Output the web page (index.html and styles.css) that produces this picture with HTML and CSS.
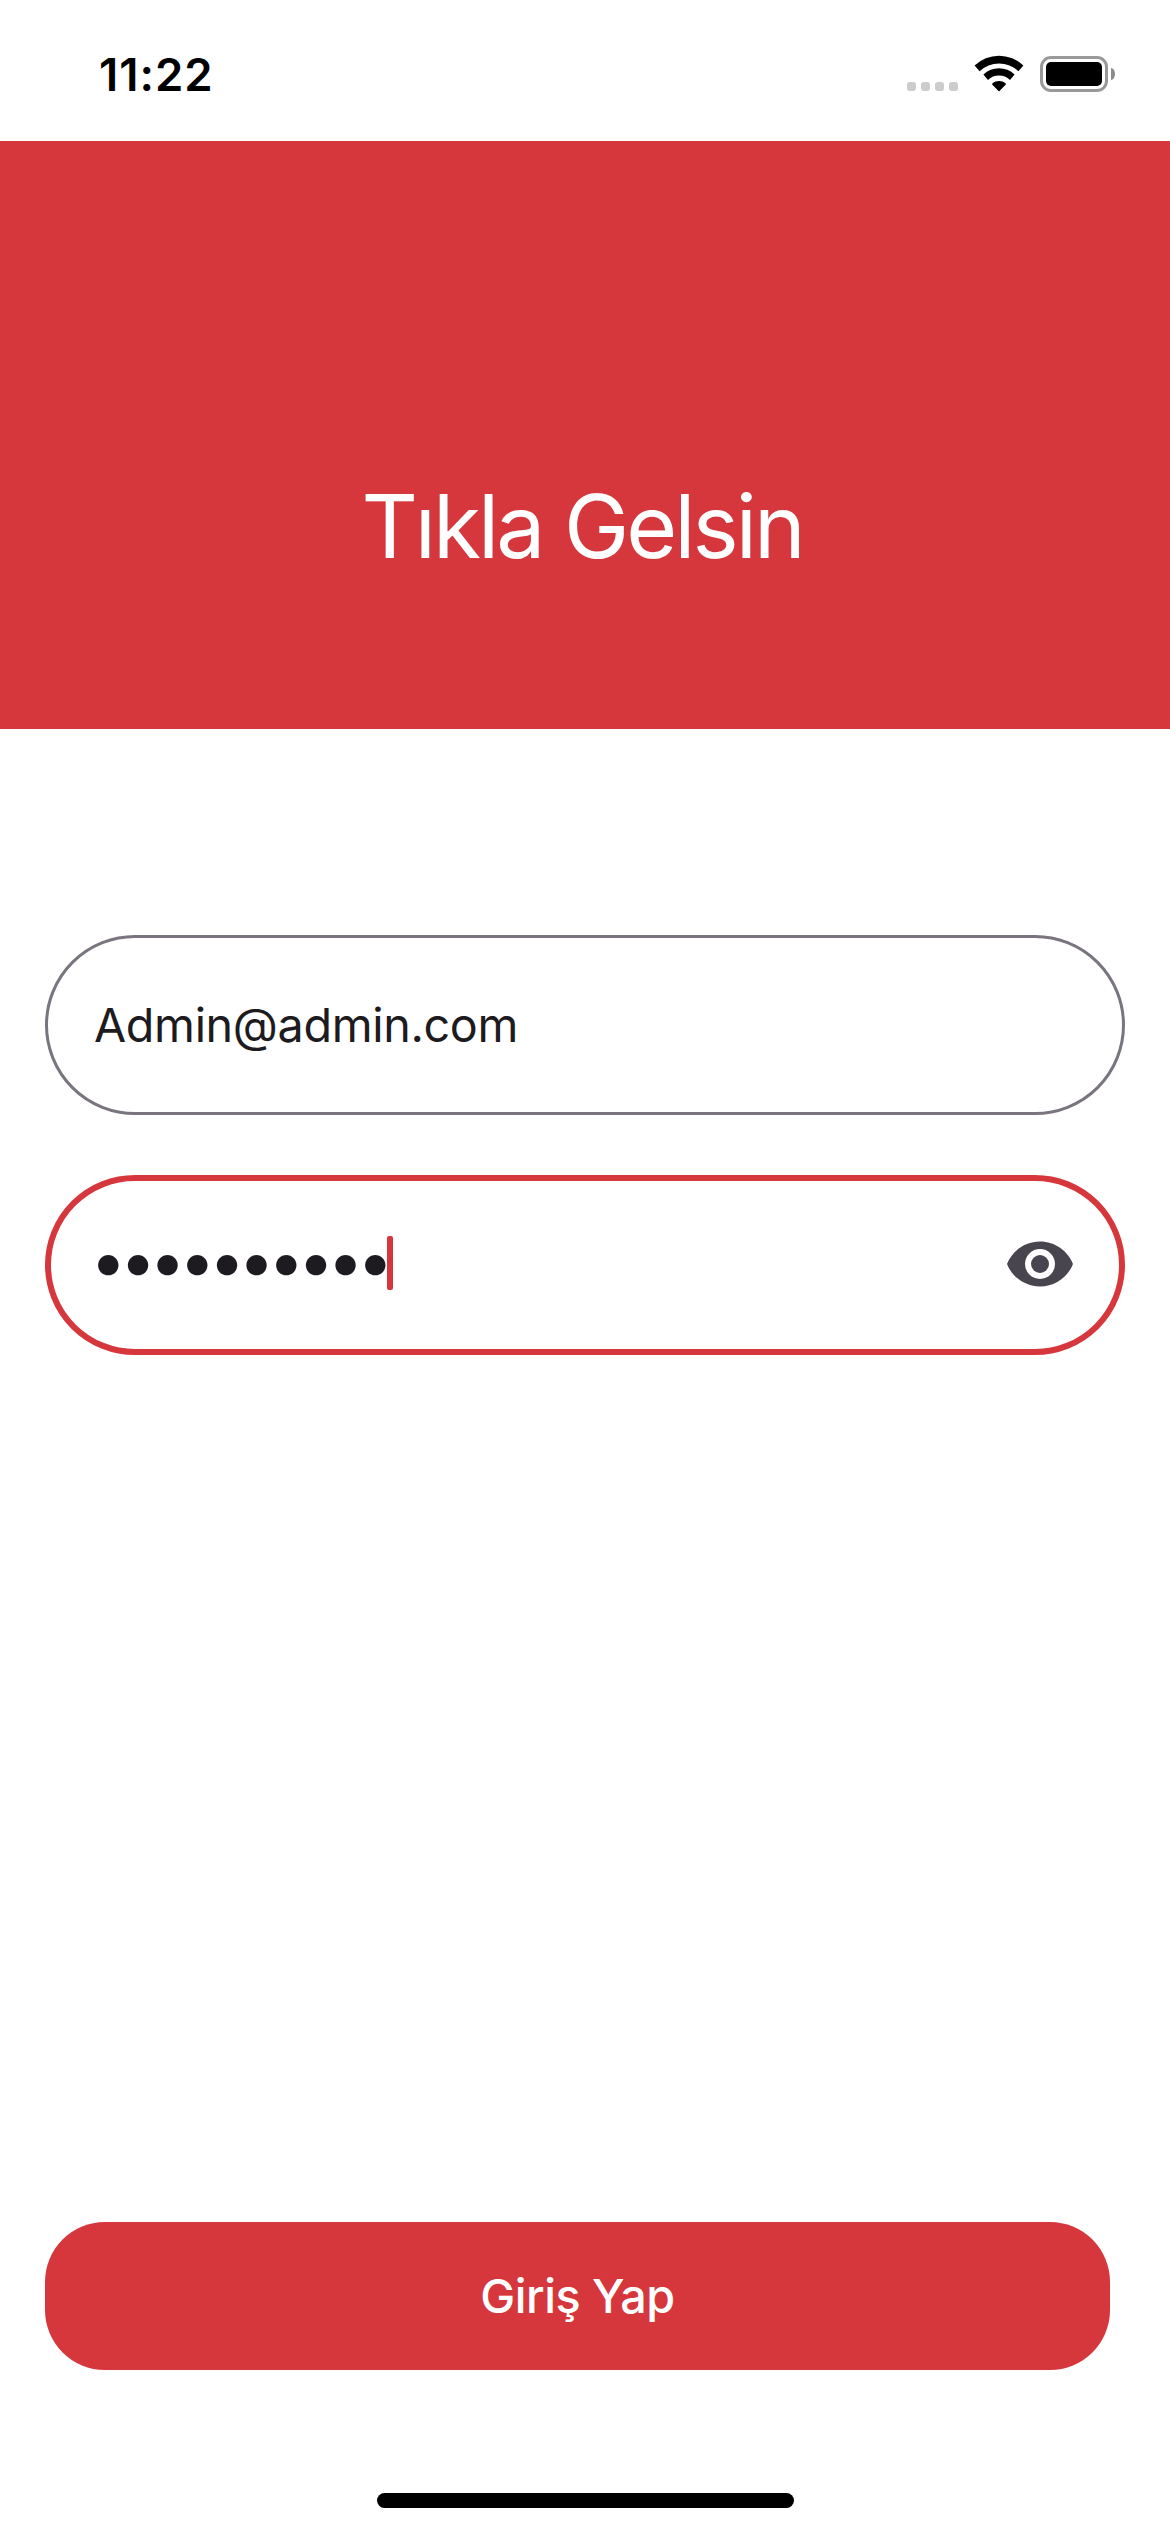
FILE: index.html
```html
<!DOCTYPE html>
<html lang="tr">
<head>
<meta charset="utf-8">
<title>Tıkla Gelsin</title>
<link rel="stylesheet" href="styles.css">
</head>
<body>
<div class="status-bar">
  <span class="time">11:22</span>
  <div class="status-icons">
    <div class="signal"><i></i><i></i><i></i><i></i></div>
    <svg class="wifi" width="50" height="37" viewBox="0 0 50 37">
      <path d="M25 36.4 18.4 29.8Q17.6 29 18.6 28.2C22 25.2 28 25.2 31.4 28.2Q32.4 29 31.6 29.8Z"/>
      <path d="M9.4 19.4A22.8 22.8 0 0 1 40.6 19.4L36 25A16 16 0 0 0 14 25Z"/>
      <path d="M.6 10.6A35 35 0 0 1 49.4 10.6L44.4 16.2A28 28 0 0 0 5.6 16.2Z"/>
    </svg>
    <div class="battery"><div class="battery-case"><div class="battery-level"></div></div><div class="battery-cap"></div></div>
  </div>
</div>
<header class="hero"><h1 class="hero-title">Tıkla Gelsin</h1></header>
<main class="form">
  <div class="field"><span class="value">Admin@admin.com</span></div>
  <div class="field field-focused">
    <span class="mask">••••••••••</span><span class="caret"></span>
    <svg class="eye" width="72" height="72" viewBox="0 0 24 24"><path d="M12,9A3,3 0 0,0 9,12A3,3 0 0,0 12,15A3,3 0 0,0 15,12A3,3 0 0,0 12,9M12,17A5,5 0 0,1 7,12A5,5 0 0,1 12,7A5,5 0 0,1 17,12A5,5 0 0,1 12,17M12,4.5C7,4.5 2.73,7.61 1,12C2.73,16.39 7,19.5 12,19.5C17,19.5 21.27,16.39 23,12C21.27,7.61 17,4.5 12,4.5Z"/></svg>
  </div>
  <button class="submit">Giriş Yap</button>
</main>
<div class="home-indicator"></div>
</body>
</html>
```

FILE: styles.css
```css
* { box-sizing: border-box; }
body {
  margin: 0;
  width: 1170px;
  height: 2532px;
  display: flex;
  flex-direction: column;
  background: #fff;
  color: #1d1b20;
  font-family: Inter, "Liberation Sans", sans-serif;
  overflow: hidden;
}
.status-bar {
  height: 141px;
  padding: 0 55px 0 99px;
  display: flex;
  justify-content: space-between;
}
.time {
  padding-top: 45px;
  font-size: 45.5px;
  line-height: 60px;
  font-weight: 600;
  letter-spacing: 1px;
  color: #000;
}
.status-icons { display: flex; height: 92px; align-items: flex-end; }
.signal { display: flex; gap: 5px; margin: 0 16px 1px 0; }
.signal i { width: 9px; height: 9px; border-radius: 3px; background: #ccc; }
.wifi { display: block; margin-right: 16px; }
.battery { display: flex; align-items: center; gap: 3px; }
.battery-case {
  width: 68px;
  height: 36px;
  padding: 3px;
  border: 3px solid #999;
  border-radius: 11px;
}
.battery-level { height: 24px; border-radius: 5px; background: #000; }
.battery-cap { width: 4px; height: 12px; border-radius: 0 4px 4px 0 / 0 6px 6px 0; background: #8c8c8c; }
.hero {
  height: 588px;
  padding: 330px 6px 0 0;
  background: #d6373c;
  text-align: center;
}
.hero-title {
  margin: 0;
  font-size: 87.5px;
  line-height: 110px;
  font-weight: 400;
  letter-spacing: -3px;
  color: #fff;
}
.form {
  height: 1641px;
  padding: 206px 45px 0;
  display: flex;
  flex-direction: column;
}
.field {
  height: 180px;
  padding: 0 45px 0 46px;
  margin-bottom: 60px;
  display: flex;
  align-items: center;
  border: 3px solid #79747e;
  border-radius: 90px;
}
.value { font-size: 46.7px; line-height: 60px; letter-spacing: -0.35px; }
.field-focused { padding: 0 43px 0 39px; border: 6px solid #d6373c; }
.mask {
  width: 297px;
  padding-bottom: 8px;
  font-size: 65px;
  line-height: 60px;
  letter-spacing: -6.9px;
  white-space: nowrap;
}
.caret { width: 6px; height: 54px; margin-bottom: 4px; border-radius: 2px; background: #d6373c; }
.eye { margin: 0 0 2px auto; fill: #49454f; }
.submit {
  width: 1065px;
  height: 148px;
  margin-top: auto;
  padding: 0;
  border: 0;
  border-radius: 60px;
  background: #d6373c;
  color: #fff;
  font: 500 46.7px/60px Inter, "Liberation Sans", sans-serif;
  letter-spacing: -0.5px;
}
.home-indicator {
  width: 417px;
  height: 15px;
  margin: 123px 0 0 377px;
  border-radius: 8px;
  background: #000;
}
```
